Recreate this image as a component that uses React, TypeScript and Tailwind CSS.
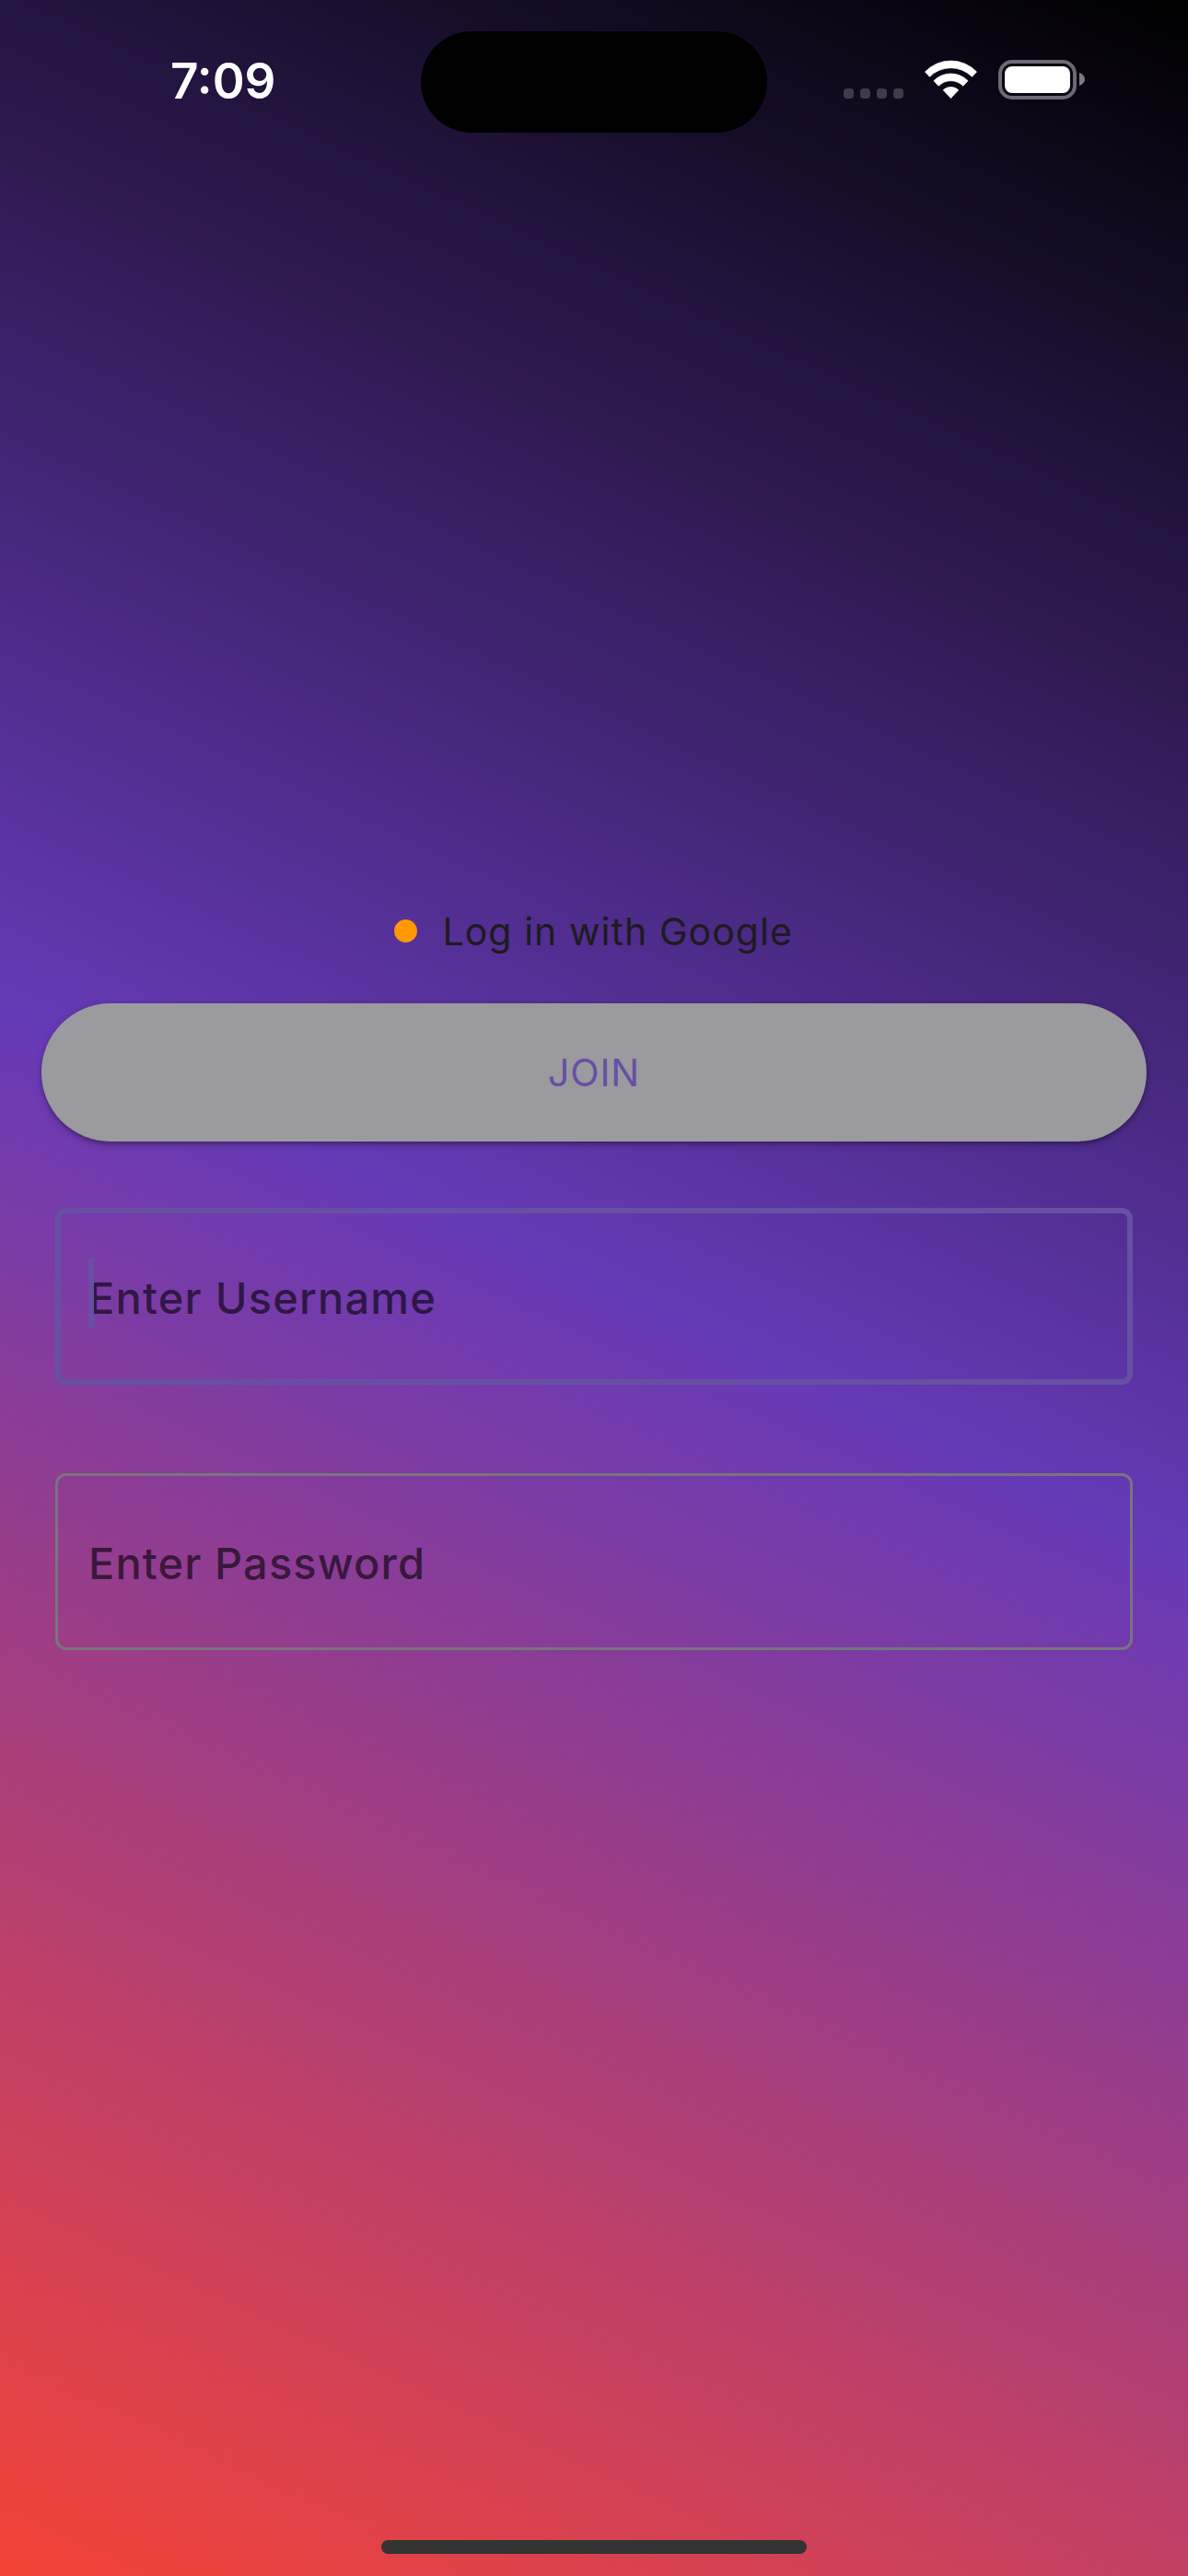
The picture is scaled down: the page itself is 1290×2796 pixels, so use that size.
function WifiIcon() {
  return (
    <svg className="h-[42px] w-[57px]" viewBox="0 0 57 42" fill="#fff" stroke="#fff" strokeWidth="0.8" strokeLinejoin="round">
      <path d="M0.5 12.9A39 39 0 0 1 56.5 12.9L51.5 18.2A32.6 32.6 0 0 0 5.5 18.2Z" />
      <path d="M10 22.7A26 26 0 0 1 47 22.7L41.8 28.2A18.8 18.8 0 0 0 15.2 28.2Z" />
      <path d="M20.3 32.8A11.8 11.8 0 0 1 36.7 32.8L28.5 41.5Z" />
    </svg>
  );
}

function BatteryIcon() {
  return (
    <div className="flex items-center gap-[3px]">
      <div className="h-[43px] w-[85px] rounded-[15px] border-4 border-[#6e6a74] p-[3px]">
        <div className="h-full w-full rounded-[8px] bg-white" />
      </div>
      <svg className="mt-[-1px] h-[14px] w-[6px]" viewBox="0 0 6 14" fill="#7d7a82">
        <path d="M0 0C4 1.6 6 4 6 7S4 12.4 0 14Z" />
      </svg>
    </div>
  );
}

function StatusBar() {
  return (
    <header className="flex h-[176px] items-start">
      <div className="w-[457px] pl-[185px] pt-[56px]">
        <span className="block whitespace-nowrap text-[53px] font-semibold leading-[64px] text-white">7:09</span>
      </div>
      <div className="mt-[34px] h-[110px] w-[376px] rounded-full bg-black" />
      <div className="ml-[83px] mt-[65px] flex h-[43px] items-start">
        <div className="mt-[31px] flex gap-[7px]">
          {[0, 1, 2, 3].map((dot) => (
            <div key={dot} className="size-[11px] rounded-[4px] bg-[#413a4a]" />
          ))}
        </div>
        <div className="ml-[23px]"><WifiIcon /></div>
        <div className="ml-[23px]"><BatteryIcon /></div>
      </div>
    </header>
  );
}

export default function App() {
  return (
    <main className="flex h-[2796px] w-[1290px] flex-col overflow-hidden bg-[linear-gradient(204.767deg,#000000_0%,#673ab7_50%,#f44336_100%)] font-['Inter',sans-serif]">
      <StatusBar />

      <section className="mt-[805px] flex flex-col">
        <div className="flex h-[60px] items-center pl-[428px]">
          <div className="mt-[-1px] size-[25px] rounded-full bg-[#ff9800]" />
          <span className="ml-[27.5px] whitespace-nowrap text-[41px] leading-[60px] tracking-[1.05px] text-[#1d1b20]">Log in with Google</span>
        </div>

        <button className="mx-[45px] mt-[48px] flex h-[150px] items-center justify-center rounded-full bg-[#9b9a9e] text-[41px] leading-[60px] tracking-[0.8px] text-[#6750a4] shadow-[0_3px_9px_rgba(0,0,0,0.25),0_3px_3px_rgba(0,0,0,0.15)]">
          <span>JOIN</span>
        </button>

        <div className="mx-[60px] mt-[72px] flex h-[192px] items-center rounded-[12px] border-[6px] border-[#6750a4] pl-[30px]">
          <div className="relative">
            <span className="block whitespace-nowrap pt-[4px] text-[47px] font-[450] leading-[60px] tracking-[1.2px] text-black/60">Enter Username</span>
            <div className="absolute left-0 top-[-10px] h-[78px] w-[6px] rounded-full bg-[#6750a4]" />
          </div>
        </div>

        <div className="mx-[60px] mt-[96px] flex h-[192px] items-center rounded-[12px] border-[3px] border-[#79747e] pl-[33px]">
          <span className="block whitespace-nowrap pt-[4px] text-[47px] font-[450] leading-[60px] tracking-[1.1px] text-black/60">Enter Password</span>
        </div>
      </section>

      <div className="mx-auto mb-[24px] mt-auto h-[15px] w-[462px] rounded-full bg-[#343434]" />
    </main>
  );
}
